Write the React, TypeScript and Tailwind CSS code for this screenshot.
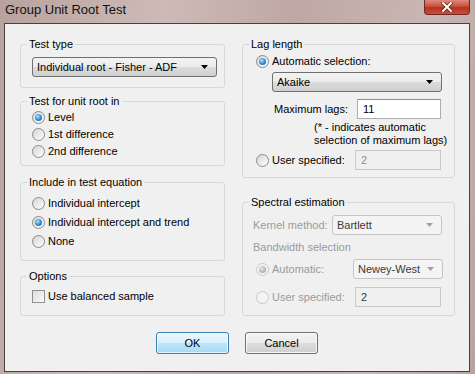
import type { ReactNode } from "react";

function Radio({ checked = false, disabled = false }: { checked?: boolean; disabled?: boolean }) {
  return (
    <span
      className={`flex h-[13px] w-[13px] shrink-0 items-center justify-center rounded-full border ${
        disabled
          ? "border-[#c9c9c9] bg-[#f3f3f3]"
          : "border-[#8a8a8a] bg-[linear-gradient(135deg,#d6d6d6,#fdfdfd)]"
      }`}
    >
      {checked && (
        <span
          className={`h-[7px] w-[7px] rounded-full ${
            disabled
              ? "bg-[radial-gradient(circle_at_40%_35%,#e6e6e6,#a9a9a9_75%)]"
              : "bg-[radial-gradient(circle_at_40%_35%,#a8e4ff,#2b8bd6_55%,#155a97)]"
          }`}
        />
      )}
    </span>
  );
}

function Arrow({ disabled = false }: { disabled?: boolean }) {
  return (
    <svg width="7" height="4" viewBox="0 0 7 4" className="shrink-0">
      <polygon points="0,0 7,0 3.5,4" fill={disabled ? "#a0a0a0" : "#000"} />
    </svg>
  );
}

function Combo({ value, className, disabled = false }: { value: string; className: string; disabled?: boolean }) {
  return (
    <div
      className={`flex h-[20px] items-center justify-between rounded-[3px] border pl-[4px] pr-[8px] ${
        disabled
          ? "border-[#c5c5c5] bg-[#f4f4f4] text-[#3a3a3a]"
          : "border-[#707070] bg-[linear-gradient(#f3f3f3,#ececec_50%,#dcdcdc_51%,#d0d0d0)] text-black"
      } ${className}`}
    >
      <span className="whitespace-nowrap">{value}</span>
      <Arrow disabled={disabled} />
    </div>
  );
}

function Field({ value, className, disabled = false }: { value: string; className: string; disabled?: boolean }) {
  return (
    <div
      className={`flex h-[20px] items-center border px-[5px] ${
        disabled ? "border-[#c9c9c9] bg-[#f0f0f0] text-[#8e8e8e]" : "border-[#abadb3] border-t-[#8e8f8f] bg-white text-black"
      } ${className}`}
    >
      {value}
    </div>
  );
}

function Group({ title, className, children }: { title: string; className: string; children: ReactNode }) {
  return (
    <fieldset className={`rounded-[3px] border border-[#d5d9dc] ${className}`}>
      <legend className="ml-[6px] px-[2px] leading-[15px] text-black">{title}</legend>
      {children}
    </fieldset>
  );
}

function Option({ label, checked = false, className }: { label: string; checked?: boolean; className: string }) {
  return (
    <div className={`flex items-center gap-[3px] whitespace-nowrap ${className}`}>
      <Radio checked={checked} />
      <span>{label}</span>
    </div>
  );
}

function DialogButton({ label, primary = false }: { label: string; primary?: boolean }) {
  return (
    <button
      className={`flex h-[22px] w-[73px] items-center justify-center rounded-[3px] border ${
        primary
          ? "border-[#3c7fb1] bg-[linear-gradient(#eaf6fd,#d9f0fc_50%,#bee6fd_51%,#a7d9f5)] shadow-[inset_0_0_0_1px_#ffffffaa]"
          : "border-[#707070] bg-[linear-gradient(#f2f2f2,#ebebeb_50%,#dddddd_51%,#cfcfcf)] shadow-[inset_0_0_0_1px_#ffffffcc]"
      }`}
    >
      {label}
    </button>
  );
}

export default function App() {
  return (
    <div className="flex h-[374px] w-[475px] flex-col bg-[linear-gradient(100deg,#b8a29d,#cdbab6_30%,#bfa8a3_55%,#c9b6b2_80%,#b9a39e)] font-['Liberation_Sans',Arial,sans-serif] text-[11px] text-black">
      {/* Title bar */}
      <div className="flex h-[23px] shrink-0 items-start justify-between">
        <span className="pl-[5px] pt-[2px] text-[13px] leading-[16px] text-[#111]">Group Unit Root Test</span>
        <div className="mr-[5px] flex h-[15px] w-[46px] items-center justify-center rounded-b-[4px] border border-t-0 border-[#6e2a22] bg-[linear-gradient(#e08a7a,#c8503c_45%,#b5321e_55%,#c8503c)]">
          <svg width="12" height="10" viewBox="0 0 12 10">
            <path d="M2 1 L10 9 M10 1 L2 9" stroke="#4a1a14" strokeWidth="3.2" strokeLinecap="square" />
            <path d="M2 1 L10 9 M10 1 L2 9" stroke="#fff" strokeWidth="2" strokeLinecap="square" />
          </svg>
        </div>
      </div>

      {/* Client area */}
      <div className="ml-[4px] mr-[5px] h-[349px] shrink-0 border border-[#4f3f3c] bg-[#f0f0f0] pl-[15px] pr-[14px] pt-[13px]">
        <div className="flex gap-[17px]">
          {/* Left column */}
          <div className="flex w-[205px] flex-col">
            <Group title="Test type" className="h-[51px]">
              <Combo value="Individual root - Fisher - ADF" className="ml-[11px] mt-[5px] w-[185px]" />
            </Group>

            <Group title="Test for unit root in" className="mt-[6px] h-[72px]">
              <div className="flex flex-col pl-[11px]">
                <Option label="Level" checked className="h-[17px]" />
                <Option label="1st difference" className="h-[17px]" />
                <Option label="2nd difference" className="h-[17px]" />
              </div>
            </Group>

            <Group title="Include in test equation" className="mt-[9px] h-[86px]">
              <div className="mt-[4px] flex flex-col pl-[11px]">
                <Option label="Individual intercept" className="h-[19px]" />
                <Option label="Individual intercept and trend" checked className="h-[19px]" />
                <Option label="None" className="h-[19px]" />
              </div>
            </Group>

            <Group title="Options" className="mt-[8px] h-[47px]">
              <div className="mt-[4px] flex h-[17px] items-center gap-[3px] pl-[11px]">
                <span className="h-[13px] w-[13px] shrink-0 border border-[#8e8f8f] bg-[linear-gradient(135deg,#dcdcdc,#fbfbfb)]" />
                <span>Use balanced sample</span>
              </div>
            </Group>
          </div>

          {/* Right column */}
          <div className="flex w-[213px] flex-col">
            <Group title="Lag length" className="h-[141px]">
              <div className="flex flex-col pl-[13px]">
                <Option label="Automatic selection:" checked className="mt-[1px] h-[17px]" />
                <Combo value="Akaike" className="ml-[16px] mt-[2px] w-[170px]" />
                <div className="mt-[7px] flex h-[20px] items-center">
                  <span className="ml-[18px] w-[83px] whitespace-nowrap">Maximum lags:</span>
                  <Field value="11" className="w-[84px]" />
                </div>
                <div className="ml-[58px] mt-[2px] whitespace-nowrap leading-[13px]">
                  <div>(* - indicates automatic</div>
                  <div>selection of maximum lags)</div>
                </div>
                <div className="mt-[3px] flex h-[20px] items-center">
                  <Option label="User specified:" className="w-[99px]" />
                  <Field value="2" disabled className="w-[86px]" />
                </div>
              </div>
            </Group>

            <Group title="Spectral estimation" className="mt-[17px] h-[121px]">
              <div className="flex flex-col pl-[10px] text-[#9b9b9b]">
                <div className="mt-[5px] flex h-[20px] items-center">
                  <span className="w-[79px] whitespace-nowrap">Kernel method:</span>
                  <Combo value="Bartlett" disabled className="w-[110px]" />
                </div>
                <div className="mt-[5px] h-[15px] leading-[15px]">Bandwidth selection</div>
                <div className="mt-[4px] flex h-[20px] items-center pl-[3px]">
                  <span className="flex w-[97px] items-center gap-[3px] whitespace-nowrap">
                    <Radio checked disabled />
                    <span>Automatic:</span>
                  </span>
                  <Combo value="Newey-West" disabled className="w-[90px]" />
                </div>
                <div className="mt-[8px] flex h-[20px] items-center pl-[3px]">
                  <span className="flex w-[99px] items-center gap-[3px] whitespace-nowrap">
                    <Radio disabled />
                    <span>User specified:</span>
                  </span>
                  <Field value="2" disabled className="w-[86px] !text-[#3a3a3a]" />
                </div>
              </div>
            </Group>
          </div>
        </div>

        {/* Buttons */}
        <div className="mt-[16px] flex justify-center gap-[16px] pr-[1px]">
          <DialogButton label="OK" primary />
          <DialogButton label="Cancel" />
        </div>
      </div>
    </div>
  );
}
